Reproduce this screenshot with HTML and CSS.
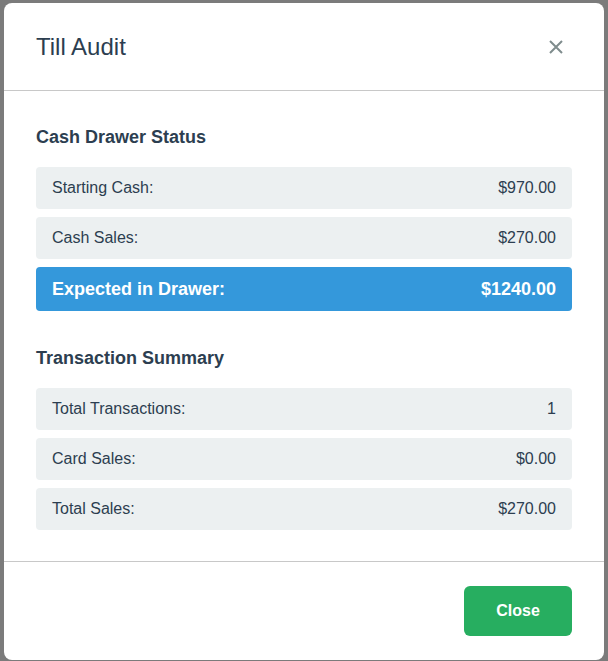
FILE: index.html
```html
<!DOCTYPE html>
<html>
<head>
<meta charset="utf-8">
<link rel="stylesheet" href="styles.css">
</head>
<body>
<div class="modal">
  <div class="modal-header">
    <h2 class="modal-title">Till Audit</h2>
    <button class="close-x" aria-label="Close">
      <svg width="16" height="16" viewBox="0 0 16 16"><path d="M2 2 L14 14 M14 2 L2 14" stroke="#7f8c8d" stroke-width="2" fill="none"/></svg>
    </button>
  </div>
  <div class="modal-body">
    <section class="section">
      <h3 class="section-title">Cash Drawer Status</h3>
      <div class="rows">
        <div class="row"><span>Starting Cash:</span><span>$970.00</span></div>
        <div class="row"><span>Cash Sales:</span><span>$270.00</span></div>
        <div class="row row-highlight"><span>Expected in Drawer:</span><span>$1240.00</span></div>
      </div>
    </section>
    <section class="section">
      <h3 class="section-title">Transaction Summary</h3>
      <div class="rows">
        <div class="row"><span>Total Transactions:</span><span>1</span></div>
        <div class="row"><span>Card Sales:</span><span>$0.00</span></div>
        <div class="row"><span>Total Sales:</span><span>$270.00</span></div>
      </div>
    </section>
  </div>
  <div class="modal-footer">
    <button class="btn-close">Close</button>
  </div>
</div>
</body>
</html>
```
FILE: styles.css
```css
html, body {
  margin: 0;
  height: 100%;
}
body {
  background: #7b7b7b;
  padding: 3px 4px;
  box-sizing: border-box;
  font-family: "Liberation Sans", Arial, sans-serif;
  color: #2c3e50;
}
.modal {
  width: 600px;
  height: 657px;
  background: #fff;
  border-radius: 8px;
  display: flex;
  flex-direction: column;
  overflow: hidden;
}
.modal-header {
  display: flex;
  align-items: center;
  justify-content: space-between;
  padding: 25px 32px 24px;
  border-bottom: 1px solid #c8c8c8;
}
.modal-title {
  margin: 0;
  font-size: 24px;
  font-weight: normal;
  line-height: 38px;
  color: #2c3e50;
}
.close-x {
  border: 0;
  background: none;
  padding: 0;
  margin-right: 8px;
  width: 16px;
  height: 16px;
  display: flex;
}
.modal-body {
  padding: 32px 32px 31px;
  border-bottom: 1px solid #c8c8c8;
  display: flex;
  flex-direction: column;
  gap: 33px;
}
.section-title {
  margin: 0 0 16px;
  font-size: 18px;
  font-weight: bold;
  line-height: 28px;
  color: #2c3e50;
}
.rows {
  display: flex;
  flex-direction: column;
  gap: 8px;
}
.row {
  display: flex;
  justify-content: space-between;
  align-items: center;
  height: 42px;
  padding: 0 16px;
  background: #ecf0f1;
  border-radius: 4px;
  font-size: 16px;
  color: #2c3e50;
}
.row-highlight {
  height: 44px;
  background: #3498db;
  color: #fff;
  font-size: 18px;
  font-weight: bold;
}
.modal-footer {
  display: flex;
  justify-content: flex-end;
  padding: 24px 32px;
}
.btn-close {
  width: 108px;
  height: 50px;
  border: 0;
  border-radius: 6px;
  background: #27ae60;
  color: #fff;
  font-family: "Liberation Sans", Arial, sans-serif;
  font-size: 16px;
  font-weight: bold;
}
```
